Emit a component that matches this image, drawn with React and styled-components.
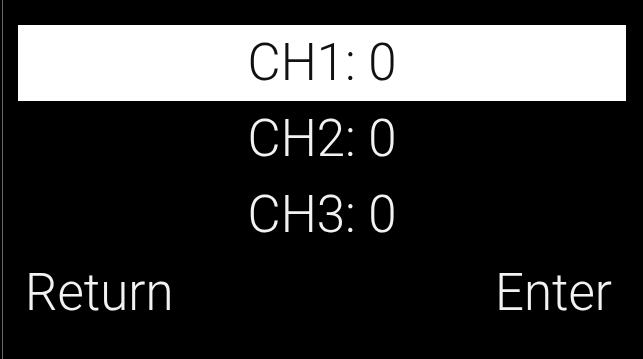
import React from "react";
import styled, { createGlobalStyle } from "styled-components";

const GlobalStyle = createGlobalStyle`
  html, body {
    margin: 0;
    padding: 0;
    background: #000;
  }
  body {
    font-family: Roboto, "Noto Sans", sans-serif;
  }
`;

const channels = [
  { name: "CH1", value: 0 },
  { name: "CH2", value: 0 },
  { name: "CH3", value: 0 },
];

const App = () => {
  const selected = 0;

  return (
    <>
      <GlobalStyle />
      <Screen>
        <Menu>
          {channels.map((ch, idx) => (
            <Row key={ch.name} active={idx === selected}>
              {ch.name}: {ch.value}
            </Row>
          ))}
        </Menu>
        <Footer>
          <SoftKey>Return</SoftKey>
          <SoftKey>Enter</SoftKey>
        </Footer>
      </Screen>
    </>
  );
};

const Screen = styled.div`
  width: 641px;
  height: 359px;
  margin-left: 2px;
  box-sizing: border-box;
  background: #000;
  border-left: 1px solid #6a6a6a;
  padding: 25px 17px 0 15px;
  display: flex;
  flex-direction: column;
  overflow: hidden;
`;

const Menu = styled.div`
  display: flex;
  flex-direction: column;
`;

const Row = styled.div.withConfig({
  shouldForwardProp: (prop) => prop !== "active",
})`
  height: 76px;
  line-height: 76px;
  text-align: center;
  font-size: 51px;
  font-weight: 300;
  color: ${(p) => (p.active ? "#111" : "#f2f2f2")};
  background: ${(p) => (p.active ? "#fff" : "transparent")};
`;

const Footer = styled.div`
  display: flex;
  justify-content: space-between;
  align-items: center;
  height: 80px;
  padding: 0 14px 0 7px;
`;

const SoftKey = styled.span`
  font-size: 51px;
  font-weight: 300;
  color: #f2f2f2;
  line-height: 80px;
`;

export default App;
